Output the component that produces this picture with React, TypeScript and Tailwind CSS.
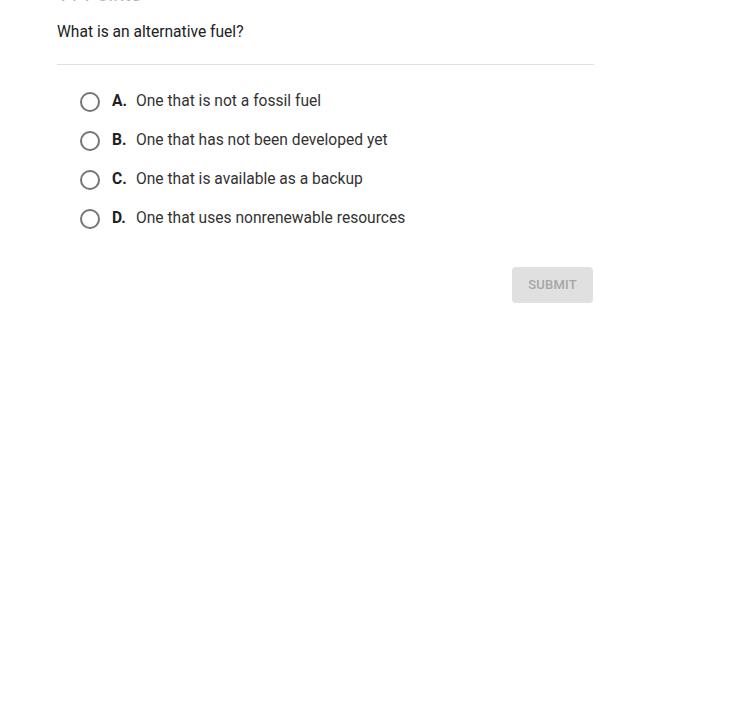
const options = [
  { key: 'A', text: 'One that is not a fossil fuel' },
  { key: 'B', text: 'One that has not been developed yet' },
  { key: 'C', text: 'One that is available as a backup' },
  { key: 'D', text: 'One that uses nonrenewable resources' },
]

export default function App() {
  return (
    <div className="min-h-[714px] w-[750px] bg-white font-['Roboto',sans-serif] text-[#212121]">
      <div className="ml-[57px] w-[537px]">
        <div className="h-[20px] overflow-hidden">
          <div className="-mt-[16px] text-[20px] leading-[20px] text-[#b8b8b8]">11 Points</div>
        </div>
        <p className="mt-[2px] text-[15.6px] leading-[20px]">What is an alternative fuel?</p>
        <div className="mt-[22px] h-px bg-[#e0e0e0]" />
        <div className="mt-[27px] flex flex-col gap-[19px] pl-[23px]">
          {options.map((o) => (
            <label key={o.key} className="flex h-[20px] items-center">
              <span className="h-[20px] w-[20px] rounded-full border-2 border-[#757575]" />
              <span className="ml-[12px] w-[24px] text-[15.6px] font-bold text-[#212121]">{o.key}.</span>
              <span className="text-[15.6px] text-[#333]">{o.text}</span>
            </label>
          ))}
        </div>
        <div className="mt-[38px] flex justify-end">
          <button className="mr-px h-[36px] w-[81px] rounded-[4px] bg-[#e0e0e0] text-[13px] font-medium tracking-[0.2px] text-[#a6a6a6]">
            SUBMIT
          </button>
        </div>
      </div>
    </div>
  )
}
